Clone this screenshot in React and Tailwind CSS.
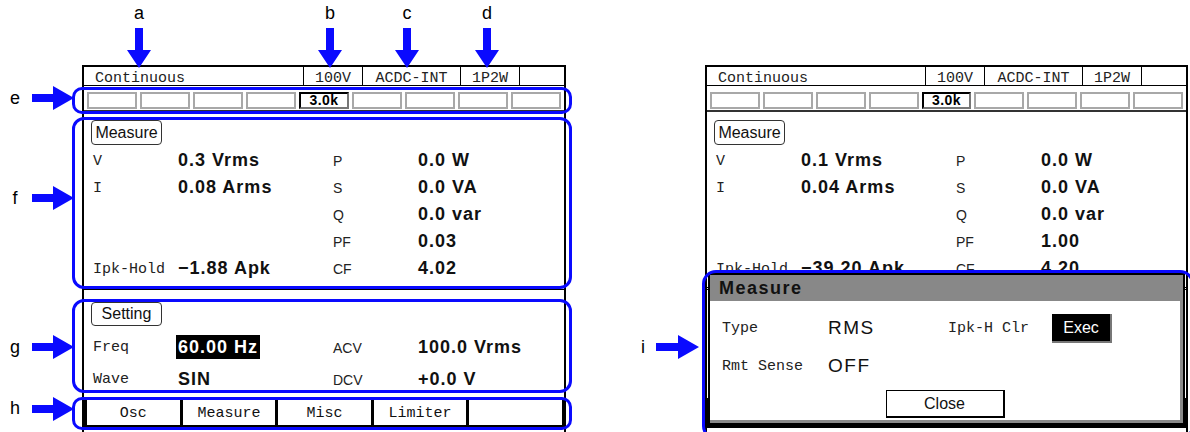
const MONO = "[font-family:'Liberation_Mono',monospace]";
const SANS = "[font-family:'Liberation_Sans',Arial,sans-serif]";

function Header() {
  return (
    <div className={`flex h-[19px] border-b border-black text-[15px] leading-[23px] text-[#222] ${MONO}`}>
      <div className="flex-1 pl-[11px]">Continuous</div>
      <div className="w-[59px] border-l border-black text-center">100V</div>
      <div className="w-[98px] border-l border-black text-center">ACDC-INT</div>
      <div className="w-[59px] border-l border-black text-center">1P2W</div>
      <div className="w-[45px] border-l border-black"></div>
    </div>
  );
}

function Bar() {
  const cells = [0, 1, 2, 3, 4, 5, 6, 7, 8];
  return (
    <div className="flex gap-[3px] px-[3px] pt-[6px] pb-[1px] border-b-2 border-[#333]">
      {cells.map((i) =>
        i === 4 ? (
          <div key={i} className={`w-[50px] h-[17px] border-2 border-black border-r-[#777] border-b-[#777] text-[14px] font-bold leading-[13px] text-center tracking-[0.5px] ${SANS}`}>
            3.0k
          </div>
        ) : (
          <div key={i} className="w-[50px] h-[17px] border-2 border-[#a8a8a8]"></div>
        )
      )}
    </div>
  );
}

function Val({ children }) {
  return <div className={`text-[18px] font-bold tracking-[1px] text-[#111] ${SANS}`}>{children}</div>;
}
function LabL({ children }) {
  return <div className={`pt-[3px] text-[15px] text-[#222] ${MONO}`}>{children}</div>;
}
function LabR({ children }) {
  return <div className={`pt-[2px] text-[14px] text-[#222] ${SANS}`}>{children}</div>;
}

function Box({ children, h }) {
  return (
    <div className={`w-[71px] ${h} ml-[7px] border border-[#333] rounded-[4px] text-[16px] text-center text-[#111] ${SANS}`}>
      {children}
    </div>
  );
}

function MeasureSection({ v, i, pf, ipk, cf, p }) {
  return (
    <div className="h-[178px] pt-[8px] border-b-[3px] border-double border-black">
      <Box h="h-[25px] leading-[23px]">Measure</Box>
      <div className="grid grid-cols-[85px_155px_85px_1fr] auto-rows-[27px] items-center pl-[9px] mt-[2px]">
        <LabL>V</LabL><Val>{v}</Val><LabR>P</LabR><Val>{p}</Val>
        <LabL>I</LabL><Val>{i}</Val><LabR>S</LabR><Val>0.0 VA</Val>
        <div></div><div></div><LabR>Q</LabR><Val>0.0 var</Val>
        <div></div><div></div><LabR>PF</LabR><Val>{pf}</Val>
        <LabL>Ipk-Hold</LabL><Val>{ipk}</Val><LabR>CF</LabR><Val>{cf}</Val>
      </div>
    </div>
  );
}

function SettingSection({ blank }) {
  return (
    <div className="h-[108px] pt-[12px]">
      {!blank && (
        <>
          <Box h="h-[24px] leading-[22px]">Setting</Box>
          <div className="grid grid-cols-[85px_155px_85px_1fr] auto-rows-[32px] items-center pl-[9px] mt-[5px]">
            <LabL>Freq</LabL>
            <div>
              <span className={`inline-block -ml-[2px] px-[2px] h-[24px] leading-[24px] bg-black text-white text-[18px] font-bold tracking-[1px] ${SANS}`}>60.00 Hz</span>
            </div>
            <LabR>ACV</LabR><Val>100.0 Vrms</Val>
            <LabL>Wave</LabL><Val>SIN</Val><LabR>DCV</LabR><Val>+0.0 V</Val>
          </div>
        </>
      )}
    </div>
  );
}

function Tabs({ blank }) {
  const names = blank ? ["", "", "", "", ""] : ["Osc", "Measure", "Misc", "Limiter", ""];
  return (
    <div className={`flex h-[30px] border-t border-black text-[15px] text-[#111] ${MONO}`}>
      {names.map((n, k) => (
        <div
          key={k}
          className={`flex-1 pt-[4px] border-l-[3px] border-b-[3px] border-black flex items-center justify-center ${k === 4 ? "border-r-2" : ""}`}
        >
          {n}
        </div>
      ))}
    </div>
  );
}

function Dialog() {
  return (
    <div className="absolute left-[1px] top-[206px] w-[477px] h-[152px] border-2 border-black bg-white">
      <div className="h-full border-r-[3px] border-b-[3px] border-[#8a8a8a] flex flex-col">
        <div className={`h-[26px] bg-[#888888] pl-[9px] text-[18px] font-bold leading-[27px] tracking-[1.5px] text-[#111] ${SANS}`}>
          Measure
        </div>
        <div className="grid grid-cols-[106px_120px_104px_1fr] auto-rows-[38px] items-center pl-[12px] pt-[8px]">
          <LabL>Type</LabL>
          <div className={`text-[19px] tracking-[1.5px] text-[#111] ${SANS}`}>RMS</div>
          <LabL>Ipk-H Clr</LabL>
          <div>
            <div className={`w-[60px] h-[29px] bg-black text-white border-r-2 border-b-2 border-[#777] text-[16px] leading-[27px] text-center ${SANS}`}>
              Exec
            </div>
          </div>
          <LabL>Rmt Sense</LabL>
          <div className={`text-[19px] tracking-[1.5px] text-[#111] ${SANS}`}>OFF</div>
          <div></div>
          <div></div>
        </div>
        <div className="flex justify-center mt-[5px]">
          <div className={`w-[119px] h-[28px] border border-black border-r-2 border-b-2 text-[16px] leading-[26px] text-center text-[#111] ${SANS}`}>
            Close
          </div>
        </div>
      </div>
    </div>
  );
}

function Screen({ right }) {
  return (
    <div className={`relative ${right ? "w-[483px]" : "w-[484px]"} h-[380px] border-2 border-black bg-white flex flex-col`}>
      <Header />
      <Bar />
      {right ? (
        <MeasureSection v="0.1 Vrms" i="0.04 Arms" p="0.0 W" pf="1.00" ipk="−39.20 Apk" cf="4.20" />
      ) : (
        <MeasureSection v="0.3 Vrms" i="0.08 Arms" p="0.0 W" pf="0.03" ipk="−1.88 Apk" cf="4.02" />
      )}
      <SettingSection blank={right} />
      <Tabs blank={right} />
      {right && <Dialog />}
    </div>
  );
}

function DownArrow({ x }) {
  return (
    <svg className="absolute" style={{ left: x - 12, top: 28 }} width="24" height="40" viewBox="0 0 24 40">
      <polygon points="8,0 16,0 16,22 24,22 12,40 0,22 8,22" fill="#0a0aff" />
    </svg>
  );
}

function RightArrow({ x, y, w = 42 }) {
  const hx = w - 21;
  return (
    <svg className="absolute" style={{ left: x, top: y - 12 }} width={w} height="24" viewBox={`0 0 ${w} 24`}>
      <polygon points={`0,8 ${hx},8 ${hx},0 ${w},12 ${hx},24 ${hx},16 0,16`} fill="#0a0aff" />
    </svg>
  );
}

function Letter({ x, y, c }) {
  return (
    <div
      className={`absolute w-[20px] text-center text-[18px] leading-[20px] text-black ${SANS}`}
      style={{ left: x - 10, top: y - 10 }}
    >
      {c}
    </div>
  );
}

export default function App() {
  return (
    <div className="relative w-[1190px] h-[432px] bg-white overflow-hidden">
      <div className="flex pt-[65px] pl-[82px] gap-[139px]">
        <Screen />
        <Screen right />
      </div>

      {/* annotation outlines */}
      <div className="absolute left-[72px] top-[87px] w-[500px] h-[27px] border-[3px] border-[#0a0aff] rounded-[10px]"></div>
      <div className="absolute left-[72px] top-[117px] w-[500px] h-[172px] border-[3px] border-[#0a0aff] rounded-[12px]"></div>
      <div className="absolute left-[72px] top-[299px] w-[500px] h-[94px] border-[3px] border-[#0a0aff] rounded-[12px]"></div>
      <div className="absolute left-[72px] top-[397px] w-[500px] h-[33px] border-[3px] border-[#0a0aff] rounded-[10px]"></div>
      <div className="absolute left-[702px] top-[270px] w-[492px] h-[170px] border-[3px] border-[#0a0aff] rounded-[14px]"></div>

      {/* letters */}
      <Letter x={139} y={13} c="a" />
      <Letter x={330} y={13} c="b" />
      <Letter x={407} y={13} c="c" />
      <Letter x={487} y={13} c="d" />
      <Letter x={15} y={98} c="e" />
      <Letter x={15} y={198} c="f" />
      <Letter x={15} y={347} c="g" />
      <Letter x={15} y={408} c="h" />
      <Letter x={643} y={347} c="i" />

      {/* arrows */}
      <DownArrow x={139} />
      <DownArrow x={330} />
      <DownArrow x={407} />
      <DownArrow x={487} />
      <RightArrow x={32} y={98} />
      <RightArrow x={32} y={198} />
      <RightArrow x={32} y={347} />
      <RightArrow x={32} y={409} />
      <RightArrow x={656} y={347} w={43} />
    </div>
  );
}
